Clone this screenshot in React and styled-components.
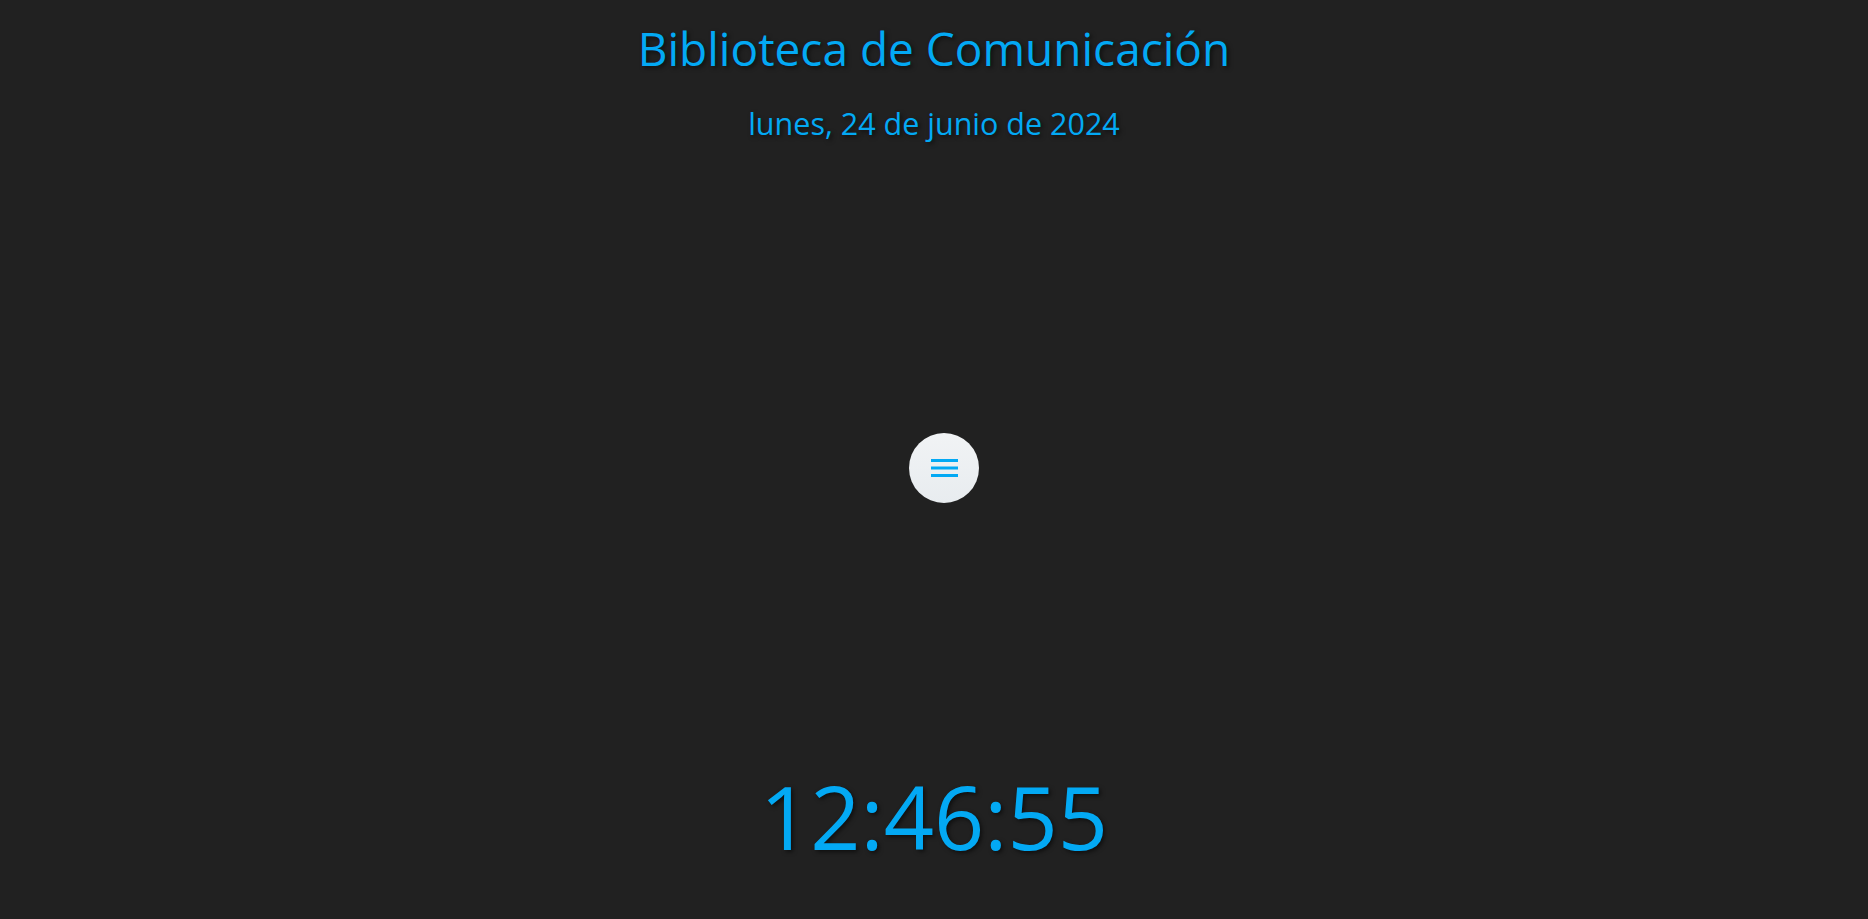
import React from "react";
import styled, { createGlobalStyle } from "styled-components";

const GlobalStyle = createGlobalStyle`
  html, body {
    margin: 0;
    padding: 0;
    background: #212121;
  }
  body {
    font-family: "Segoe UI", "Open Sans", "Noto Sans", sans-serif;
    color: #03a9f4;
  }
`;

const Page = styled.div`
  min-height: 100vh;
  display: flex;
  flex-direction: column;
  align-items: center;
  box-sizing: border-box;
  padding-bottom: 43px;
`;

const Header = styled.header`
  display: flex;
  flex-direction: column;
  align-items: center;
  padding-top: 17px;
  gap: 23px;
`;

const Title = styled.h1`
  margin: 0;
  font-size: 46px;
  font-weight: 400;
  line-height: normal;
  color: #03a9f4;
  text-shadow: 2px 2px 4px rgba(0, 0, 0, 0.55);
`;

const DateLine = styled.p`
  margin: 0;
  font-size: 30.5px;
  font-weight: 400;
  line-height: normal;
  color: #03a9f4;
  text-shadow: 2px 2px 4px rgba(0, 0, 0, 0.55);
`;

const Main = styled.main`
  flex: 1;
  display: flex;
  align-items: center;
  justify-content: center;
  padding-top: 36px;
`;

const MenuButton = styled.button`
  width: 70px;
  height: 70px;
  margin-left: 20px;
  border-radius: 50%;
  border: none;
  padding: 0;
  display: flex;
  align-items: center;
  justify-content: center;
  background: linear-gradient(180deg, #f1f3f5 0%, #e8ecef 100%);
  cursor: pointer;
`;

const Clock = styled.div`
  font-size: 88px;
  font-weight: 400;
  line-height: normal;
  color: #03a9f4;
  text-shadow: 2px 2px 4px rgba(0, 0, 0, 0.55);
`;

function BarsIcon() {
  return (
    <svg width="27" height="18" viewBox="0 0 27 18" aria-hidden="true">
      <rect x="0" y="0" width="27" height="3" fill="#03a9f4" />
      <rect x="0" y="7.5" width="27" height="3" fill="#03a9f4" />
      <rect x="0" y="15" width="27" height="3" fill="#03a9f4" />
    </svg>
  );
}

export default function App() {
  return (
    <>
      <GlobalStyle />
      <Page>
        <Header>
          <Title>Biblioteca de Comunicación</Title>
          <DateLine>lunes, 24 de junio de 2024</DateLine>
        </Header>
        <Main>
          <MenuButton aria-label="Menú">
            <BarsIcon />
          </MenuButton>
        </Main>
        <Clock>12:46:55</Clock>
      </Page>
    </>
  );
}
